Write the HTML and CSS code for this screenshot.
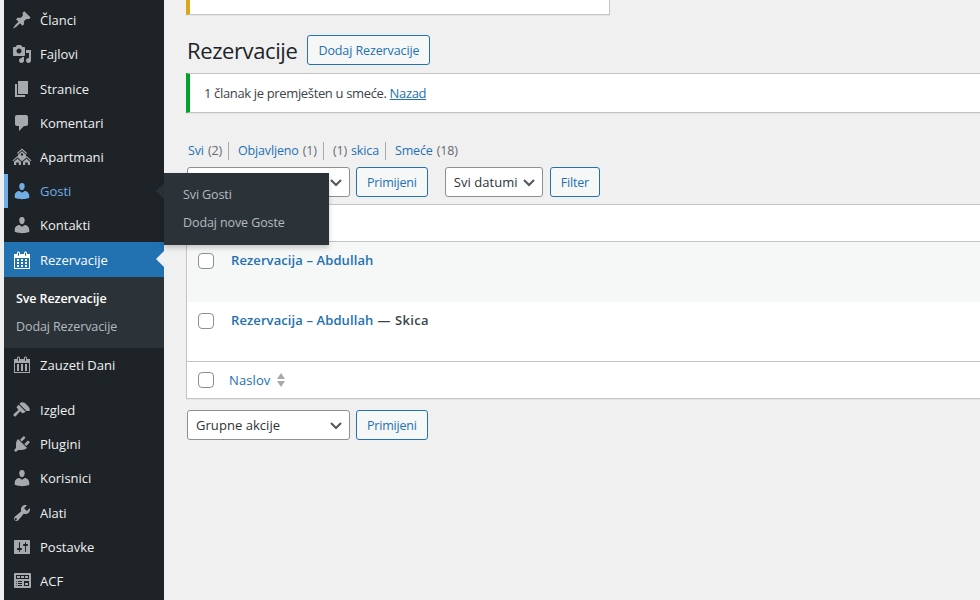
FILE: index.html
```html
<!DOCTYPE html>
<html>
<head>
  <meta charset="UTF-8">
  <title>Rezervacije</title>
  <link rel="stylesheet" href="styles.css">
</head>
<body>
  <div id="page">
    <div id="adminmenu">
      <a class="item"><svg viewBox="0 0 20 20"><path d="M10.44 3.02l1.82-1.82 6.36 6.35-1.83 1.82c-1.05-.68-2.48-.57-3.41.36l-.75.75c-.92.93-1.04 2.35-.35 3.41l-1.83 1.82-2.41-2.41-2.8 2.79c-.42.42-3.38 2.71-3.8 2.29s1.86-3.39 2.28-3.81l2.79-2.79L4.1 9.36l1.83-1.82c1.05.69 2.48.57 3.4-.36l.75-.75c.93-.92 1.05-2.35.36-3.41z"/></svg>Članci</a>
      <a class="item"><svg viewBox="0 0 20 20"><path d="M13 11V4c0-.55-.45-1-1-1h-1.67L9 1H5L3.67 3H2c-.55 0-1 .45-1 1v7c0 .55.45 1 1 1h10c.55 0 1-.45 1-1zM7 4.500c1.380 0 2.500 1.120 2.500 2.500S8.380 9.500 7 9.500 4.500 8.380 4.500 7 5.620 4.500 7 4.500zM14 6h5v10.500c0 1.380-1.120 2.500-2.500 2.500S14 17.880 14 16.500s1.120-2.500 2.500-2.500c.17 0 .34.020.5.050V9h-3V6zm-4 8.050V13h2v3.500c0 1.380-1.120 2.500-2.500 2.500S7 17.880 7 16.500 8.120 14 9.500 14c.17 0 .34.020.5.050z"/></svg>Fajlovi</a>
      <a class="item"><svg viewBox="0 0 20 20"><path d="M6 15V2h10v13H6zm-1 1h8v2H3V5h2v11z"/></svg>Stranice</a>
      <a class="item"><svg viewBox="0 0 20 20"><path d="M5 2h9c1.100 0 2 .9 2 2v7c0 1.100-.9 2-2 2h-2l-5 5v-5H5c-1.100 0-2-.9-2-2V4c0-1.100.9-2 2-2z"/></svg>Komentari</a>
      <a class="item"><svg viewBox="0 0 20 20"><path fill-rule="evenodd" d="M10 1.500L15 6l-.7.9L10 3.100 5.700 6.900 5 6zM10 4.200l4 3.500v1.800L10 13 6 9.500V7.700zM10 6.300a1.200 1.200 0 1 0 0 2.400 1.200 1.200 0 0 0 0-2.400zM5.500 9l5 4.400-.7.9-4.300-3.800-4.300 3.800-.7-.9zM5.500 11.700L9 14.800V18H6.800v-2.500H4.200V18H2v-3.200zM14.500 9l5 4.400-.7.9-4.300-3.800-4.300 3.800-.7-.9zM14.500 11.700l3.500 3.100V18h-2.200v-2.500h-2.600V18H11v-3.200z"/></svg>Apartmani</a>
      <a class="item current-hover"><svg viewBox="0 0 20 20"><path d="M10 9.250c-2.270 0-2.730-3.440-2.730-3.440C7 4.020 7.820 2 9.970 2c2.160 0 2.980 2.020 2.710 3.810 0 0-.41 3.440-2.680 3.440zm0 2.570L12.720 10c2.390 0 4.520 2.330 4.520 4.530v2.490s-3.650 1.130-7.240 1.130c-3.650 0-7.240-1.130-7.240-1.130v-2.490c0-2.250 1.940-4.480 4.570-4.480z"/></svg>Gosti</a>
      <a class="item"><svg viewBox="0 0 20 20"><path d="M10 9.250c-2.270 0-2.730-3.440-2.730-3.440C7 4.020 7.820 2 9.970 2c2.160 0 2.980 2.020 2.710 3.810 0 0-.41 3.440-2.680 3.440zm0 2.570L12.720 10c2.390 0 4.520 2.330 4.520 4.530v2.490s-3.650 1.130-7.240 1.130c-3.650 0-7.240-1.130-7.240-1.130v-2.490c0-2.250 1.940-4.480 4.570-4.480z"/></svg>Kontakti</a>
      <a class="item active"><svg viewBox="0 0 20 20"><path d="M15 4h3v15H2V4h3V3c0-.41.150-.76.44-1.060.29-.29.650-.44 1.060-.44s.77.150 1.060.44c.29.300.44.650.44 1.060v1h4V3c0-.41.150-.76.44-1.060.29-.29.650-.44 1.060-.44s.77.150 1.060.44c.29.300.44.650.44 1.060v1zM6 3v2.500c0 .14.050.26.150.36.090.09.210.14.350.14s.26-.05.350-.14c.1-.1.150-.22.150-.36V3c0-.14-.05-.26-.15-.35-.09-.1-.21-.15-.35-.15s-.26.050-.35.150c-.1.090-.15.210-.15.350zm7 0v2.500c0 .14.050.26.140.36.1.09.220.14.360.14s.26-.05.360-.14c.09-.1.140-.22.140-.36V3c0-.14-.05-.26-.14-.35-.1-.1-.22-.15-.36-.15s-.26.050-.36.150c-.09.090-.14.210-.14.350zm4 15V8H3v10h14zM7 9v2H5V9h2zm2 0h2v2H9V9zm4 2V9h2v2h-2zm-6 1v2H5v-2h2zm2 0h2v2H9v-2zm4 2v-2h2v2h-2zm-6 1v2H5v-2h2zm4 2H9v-2h2v2zm4 0h-2v-2h2v2z"/></svg>Rezervacije</a>
      <div class="submenu">
        <a class="sub-current">Sve Rezervacije</a>
        <a>Dodaj Rezervacije</a>
      </div>
      <a class="item"><svg viewBox="0 0 20 20"><path d="M15 4h3v14H2V4h3V3c0-.83.67-1.500 1.500-1.500S8 2.170 8 3v1h4V3c0-.83.67-1.500 1.500-1.500S15 2.170 15 3v1zM6 3v2.500c0 .28.220.5.5.5s.5-.22.5-.5V3c0-.28-.22-.5-.5-.5S6 2.720 6 3zm7 0v2.500c0 .28.220.5.5.5s.5-.22.5-.5V3c0-.28-.22-.5-.5-.5s-.5.220-.5.500zm4 14V8H3v9h14zM7 16V9H5v7h2zm4 0V9H9v7h2zm4 0V9h-2v7h2z"/></svg>Zauzeti Dani</a>
      <div class="separator"></div>
      <a class="item"><svg viewBox="0 0 20 20"><path d="M14.480 11.060L7.410 3.990l1.500-1.500c.5-.56 2.300-.47 3.510.320 1.210.8 1.430 1.280 2.410 2.280 1.010.98 1.500 1.210 2.280 2.410.79 1.210.88 3.010.32 3.510zm-.71.71L6.700 4.700 4.930 6.470c-.39.39-.39 1.020 0 1.410l1.060 1.060c.39.39.39 1.030 0 1.420-.6.6-1.430 1.270-2.210 1.920-.78.65-1.580 1.300-2.180 1.900-.39.39-.39 1.020 0 1.410l.71.71c.39.39 1.020.39 1.410 0 .6-.6 1.250-1.400 1.900-2.180.65-.78 1.320-1.610 1.920-2.210.39-.39 1.030-.39 1.420 0l1.060 1.060c.39.39 1.020.39 1.410 0z"/></svg>Izgled</a>
      <a class="item"><svg viewBox="0 0 20 20"><path d="M13.110 4.360L9.870 7.600 8 5.730l3.240-3.240c.35-.34 1.050-.2 1.560.32.52.51.66 1.210.31 1.550zm-8 1.770l.91-1.120 9.010 9.010-1.190.84c-.71.71-2.630 1.160-3.820 1.160H6.140L4.900 17.260c-.59.59-1.540.59-2.120 0-.59-.58-.59-1.530 0-2.120l1.240-1.240v-3.880c0-1.130.4-3.190 1.090-3.890zm7.260 3.970l3.240-3.240c.34-.35 1.040-.21 1.550.31.52.51.66 1.210.31 1.550l-3.240 3.250z"/></svg>Plugini</a>
      <a class="item"><svg viewBox="0 0 20 20"><path d="M10 9.250c-2.270 0-2.730-3.440-2.730-3.440C7 4.020 7.820 2 9.970 2c2.160 0 2.980 2.020 2.710 3.810 0 0-.41 3.440-2.680 3.440zm0 2.570L12.720 10c2.390 0 4.520 2.330 4.520 4.530v2.490s-3.650 1.130-7.240 1.130c-3.650 0-7.240-1.130-7.240-1.130v-2.490c0-2.250 1.940-4.480 4.570-4.480z"/></svg>Korisnici</a>
      <a class="item"><svg viewBox="0 0 20 20"><path d="M16.680 9.770c-1.340 1.340-3.300 1.670-4.950.99l-5.410 6.520c-.99.99-2.590.99-3.570 0-.99-.98-.99-2.580 0-3.570l6.520-5.420c-.68-1.650-.35-3.610.99-4.950 1.280-1.280 3.120-1.620 4.720-1.060l-2.890 2.890 2.820 2.820 2.860-2.870c.53 1.580.18 3.390-1.090 4.670zM4.510 16.840c.4-.4.4-1.040 0-1.440-.39-.39-1.040-.39-1.430 0-.39.4-.39 1.040 0 1.440.39.39 1.040.39 1.430 0z"/></svg>Alati</a>
      <a class="item"><svg viewBox="0 0 20 20"><path d="M18 16V4c0-.55-.45-1-1-1H3c-.55 0-1 .45-1 1v12c0 .55.45 1 1 1h14c.55 0 1-.45 1-1zM8 11h1c.55 0 1 .45 1 1s-.45 1-1 1H8v1.500c0 .28-.22.5-.5.5s-.5-.22-.5-.5V13H6c-.55 0-1-.45-1-1s.45-1 1-1h1V5.500c0-.28.22-.5.5-.5s.5.220.5.500V11zm5-2h-1c-.55 0-1-.45-1-1s.45-1 1-1h1V5.500c0-.28.22-.5.5-.5s.5.220.5.500V7h1c.55 0 1 .45 1 1s-.45 1-1 1h-1v5.500c0 .28-.22.5-.5.5s-.5-.22-.5-.5V9z"/></svg>Postavke</a>
      <a class="item"><svg viewBox="0 0 20 20"><path d="M19 16V3c0-.55-.45-1-1-1H3c-.55 0-1 .45-1 1v13c0 .55.45 1 1 1h15c.55 0 1-.45 1-1zM4 4h13v4H4V4zm1 1v2h3V5H5zm4 0v2h3V5H9zm4 0v2h3V5h-3zm-8.500 5c.28 0 .5.220.5.500s-.22.5-.5.5-.5-.22-.5-.5.220-.5.500-.5zM6 10h4v1H6v-1zm6 0h5v5h-5v-5zm-7.500 2c.28 0 .5.220.5.500s-.22.5-.5.5-.5-.22-.5-.5.220-.5.500-.5zM6 12h4v1H6v-1zm7 0v2h3v-2h-3zm-8.500 2c.28 0 .5.220.5.500s-.22.5-.5.5-.5-.22-.5-.5.220-.5.500-.5zM6 14h4v1H6v-1z"/></svg>ACF</a>
    </div>

    <div id="content">
      <div class="notice notice-top"></div>
      <div class="title-row">
        <h1>Rezervacije</h1>
        <a class="button button-add">Dodaj Rezervacije</a>
      </div>
      <div class="notice notice-success">1 članak je premješten u smeće. <a>Nazad</a></div>
      <ul class="subsubsub">
        <li><a>Svi</a> (2)</li>
        <li><a>Objavljeno</a> (1)</li>
        <li>(1) <a>skica</a></li>
        <li><a>Smeće</a> (18)</li>
      </ul>
      <div class="tablenav">
        <div class="select select-bulk"><svg viewBox="0 0 16 16"><path d="M3 6l5 5 5-5"/></svg></div>
        <a class="button">Primijeni</a>
        <div class="select select-dates">Svi datumi<svg viewBox="0 0 16 16"><path d="M3 6l5 5 5-5"/></svg></div>
        <a class="button">Filter</a>
      </div>
      <div class="table">
        <div class="row head"></div>
        <div class="row post alt"><span class="check"></span><div class="post-title"><a>Rezervacija – Abdullah</a></div></div>
        <div class="row post"><span class="check"></span><div class="post-title"><a>Rezervacija – Abdullah</a><span class="post-state"> — Skica</span></div></div>
        <div class="row foot"><span class="check"></span><a>Naslov</a><svg class="sort" viewBox="0 0 10 16"><path d="M5 1l4 6H1zM5 15l4-6H1z"/></svg></div>
      </div>
      <div class="tablenav tablenav-bottom">
        <div class="select select-bulk">Grupne akcije<svg viewBox="0 0 16 16"><path d="M3 6l5 5 5-5"/></svg></div>
        <a class="button">Primijeni</a>
      </div>
    </div>

    <div class="flyout-arrow"></div>
    <div class="flyout">
      <a>Svi Gosti</a>
      <a>Dodaj nove Goste</a>
    </div>
  </div>
</body>
</html>
```

FILE: styles.css
```css
html, body
{
  margin: 0;
  height: 100%;
  background-color: #f0f0f1;
}
body
{
  font-family: "Open Sans", "Noto Sans", sans-serif;
  font-size: 13px;
  color: #3c434a;
  overflow: hidden;
}
a
{
  color: #2271b1;
}
#page
{
  position: relative;
  display: flex;
  width: 980px;
  height: 600px;
  overflow: hidden;
}
#adminmenu
{
  flex: none;
  width: 160px;
  margin-left: 4px;
  padding-top: 3.100px;
  background-color: #1d2327;
}
.item
{
  position: relative;
  display: flex;
  align-items: center;
  height: 34.2px;
  color: #f0f0f1;
}
.item svg
{
  flex: none;
  width: 20px;
  height: 20px;
  margin: 0 8px;
  fill: #a7aaad;
}
.current-hover
{
  color: #72aee6;
  box-shadow: inset 4px 0 0 #72aee6;
}
.current-hover svg
{
  fill: #72aee6;
}
.active
{
  background-color: #2271b1;
  color: #fff;
}
.active svg
{
  fill: #fff;
}
.active::after
{
  content: "";
  position: absolute;
  right: 0;
  top: 9px;
  border: 8px solid transparent;
  border-right-color: #f0f0f1;
  border-left-width: 0;
}
.submenu
{
  display: flex;
  flex-direction: column;
  height: 71px;
  padding: 8px 0 6px;
  box-sizing: border-box;
  background-color: #2c3338;
}
.submenu a
{
  padding-left: 12px;
  line-height: 28px;
  font-size: 12.500px;
  letter-spacing: -0.1px;
  color: rgba(240, 246, 252, 0.7);
}
.submenu .sub-current
{
  color: #fff;
  font-weight: 600;
}
.separator
{
  height: 11.100px;
}
#content
{
  flex: 1;
  min-width: 0;
  padding-left: 22px;
}
.notice
{
  box-sizing: border-box;
  background-color: #fff;
  border: 1px solid #c3c4c7;
  border-left-width: 4px;
  box-shadow: 0 1px 1px rgba(0, 0, 0, 0.04);
}
.notice-top
{
  width: 424px;
  height: 15px;
  border-top: none;
  border-left-color: #dba617;
}
.title-row
{
  display: flex;
  align-items: center;
  height: 30px;
  margin-top: 20px;
  padding-left: 1px;
}
h1
{
  margin: 0;
  font-size: 22px;
  font-weight: 400;
  letter-spacing: -0.4px;
  color: #1d2327;
}
.button
{
  box-sizing: border-box;
  display: inline-flex;
  align-items: center;
  height: 30px;
  padding: 0 10px;
  background-color: #f6f7f7;
  border: 1px solid #2271b1;
  border-radius: 3px;
  font-size: 12.500px;
  letter-spacing: -0.2px;
  color: #2271b1;
  white-space: nowrap;
}
.button-add
{
  width: 123px;
  margin-left: 10px;
  letter-spacing: -0.1px;
}
.notice-success
{
  display: flex;
  align-items: center;
  width: 820px;
  height: 39.500px;
  margin-top: 8px;
  padding-left: 14px;
  border-left-color: #00a32a;
  color: #3c434a;
  letter-spacing: -0.35px;
  white-space: pre;
}
.notice-success a
{
  text-decoration: underline;
}
.subsubsub
{
  display: flex;
  margin: 29.500px 0 0 2px;
  padding: 0;
  height: 18px;
  list-style: none;
  line-height: 18px;
  font-size: 12.500px;
  letter-spacing: -0.15px;
  word-spacing: 1px;
  color: #646970;
}
.subsubsub li + li
{
  margin-left: 6px;
  padding-left: 9px;
  border-left: 1px solid #a7aaad;
}
.tablenav
{
  display: flex;
  gap: 6px;
  height: 30px;
  margin-top: 7px;
  padding-left: 1px;
}
.select
{
  position: relative;
  box-sizing: border-box;
  display: flex;
  align-items: center;
  height: 30px;
  padding-left: 8px;
  background-color: #fff;
  border: 1px solid #8c8f94;
  border-radius: 3px;
  color: #2c3338;
  font-size: 13px;
  letter-spacing: 0.05px;
}
.select svg
{
  position: absolute;
  right: 5px;
  top: 6px;
  width: 16px;
  height: 16px;
  fill: none;
  stroke: #50575e;
  stroke-width: 2;
}
.select-bulk
{
  width: 163px;
}
.select-dates
{
  width: 98px;
  margin-left: 11px;
}
.select-dates + .button
{
  margin-left: 1px;
}
.table
{
  box-sizing: border-box;
  width: 820px;
  margin-top: 7px;
  background-color: #fff;
  border: 1px solid #c3c4c7;
  border-right: none;
  box-shadow: 0 1px 1px rgba(0, 0, 0, 0.04);
}
.row
{
  display: flex;
  align-items: center;
  box-sizing: border-box;
  padding-left: 11px;
  color: #3c434a;
}
.head, .foot
{
  height: 37px;
}
.head
{
  border-bottom: 1px solid #c3c4c7;
}
.foot
{
  border-top: 1px solid #c3c4c7;
}
.foot a
{
  margin-left: 15px;
  letter-spacing: 0.1px;
}
.sort
{
  width: 10px;
  height: 16px;
  margin-left: 6px;
  fill: #a7aaad;
}
.post
{
  align-items: flex-start;
  height: 59.500px;
  padding-top: 11px;
}
.alt
{
  background-color: #f6f7f7;
}
.check
{
  flex: none;
  box-sizing: border-box;
  width: 16px;
  height: 16px;
  background-color: #fff;
  border: 1px solid #8c8f94;
  border-radius: 4px;
}
.post-title
{
  margin: -2px 0 0 17px;
  line-height: 18px;
  font-weight: 600;
  letter-spacing: 0.1px;
}
.post-title a
{
  color: #2271b1;
}
.post-state
{
  letter-spacing: 0.3px;
  word-spacing: 0.5px;
  white-space: pre;
}
.tablenav-bottom
{
  margin-top: 11px;
}
.flyout-arrow
{
  position: absolute;
  left: 156px;
  top: 183px;
  border: 8px solid transparent;
  border-right-color: #2c3338;
  border-left-width: 0;
}
.flyout
{
  position: absolute;
  left: 164px;
  top: 173px;
  display: flex;
  flex-direction: column;
  box-sizing: border-box;
  width: 165px;
  height: 72px;
  padding: 8px 0 6px;
  background-color: #2c3338;
  box-shadow: 0 3px 5px rgba(0, 0, 0, 0.2);
}
.flyout a
{
  padding-left: 19px;
  line-height: 28px;
  font-size: 12.500px;
  letter-spacing: -0.1px;
  color: rgba(240, 246, 252, 0.7);
}
```
